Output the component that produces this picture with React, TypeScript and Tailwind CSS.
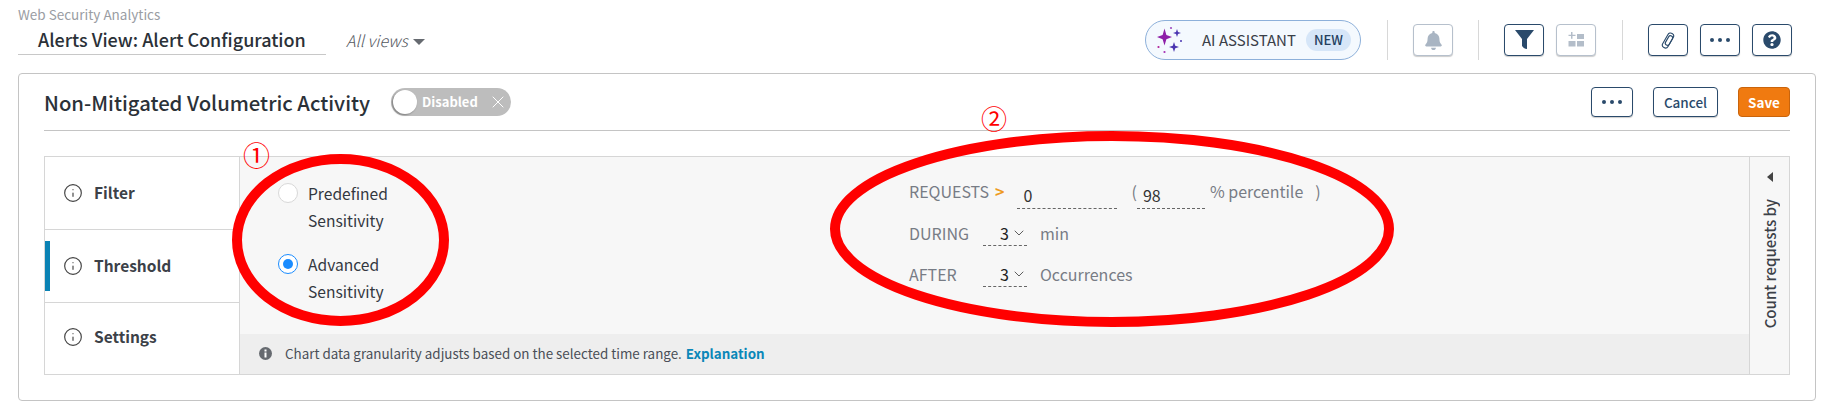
import { Info, ChevronDown, X } from "lucide-react";
import { FaBell, FaQuestionCircle } from "react-icons/fa";

const font = { fontFamily: '"Noto Sans CJK JP", "Noto Sans", sans-serif' };

function Star({ x, y, rx, ry, fill }: { x: number; y: number; rx: number; ry: number; fill: string }) {
    const kx = rx * 0.25;
    const ky = ry * 0.25;
    return (
        <path
            d={`M${x} ${y - ry} L${x + kx} ${y - ky} L${x + rx} ${y} L${x + kx} ${y + ky} L${x} ${y + ry} L${x - kx} ${y + ky} L${x - rx} ${y} L${x - kx} ${y - ky} Z`}
            fill={fill}
        />
    );
}

function Sparkles() {
    return (
        <svg width="26" height="28" viewBox="0 0 26 28">
            <Star x={7.500} y={11} rx={7.500} ry={8.500} fill="#8e1fa8" />
            <Star x={20} y={7} rx={4} ry={4} fill="#4a35b0" />
            <Star x={17} y={21} rx={5} ry={5} fill="#4a35b0" />
            <circle cx="14" cy="2" r="1.100" fill="#a04fc0" />
            <circle cx="24" cy="15" r="1" fill="#4a35b0" />
            <circle cx="1.500" cy="21" r="1.100" fill="#b01f9a" />
            <circle cx="7.500" cy="26" r="1.100" fill="#a52db5" />
        </svg>
    );
}

function Dots() {
    return (
        <div className="flex gap-[4px]">
            <span className="w-[4px] h-[4px] rounded-full bg-[#2a4a6b]" />
            <span className="w-[4px] h-[4px] rounded-full bg-[#2a4a6b]" />
            <span className="w-[4px] h-[4px] rounded-full bg-[#2a4a6b]" />
        </div>
    );
}

function IconButton({ children, disabled, className }: { children: React.ReactNode; disabled?: boolean; className?: string }) {
    return (
        <button className={`w-10 h-8 flex items-center justify-center rounded-[4px] border bg-white shadow-[0_1px_1px_rgba(0,0,0,0.2)] ${disabled ? "border-[#b6c0cc]" : "border-[#2a4a6b]"} ${className ?? ""}`}>
            {children}
        </button>
    );
}

function Tab({ label, active, last }: { label: string; active?: boolean; last?: boolean }) {
    return (
        <div className={`relative flex items-center pl-[18px] gap-[11px] ${last ? "flex-1 pb-[3px]" : "h-[73px] pb-[1px] border-b border-[#d6d6d6]"}`}>
            {active && <span className="absolute left-0 top-[11px] w-[5px] h-[50px] bg-[#0a82b4]" />}
            <Info size={20} strokeWidth={1.4} className="text-[#444]" />
            <span className="text-[15.5px] font-semibold text-[#3c4148]">{label}</span>
        </div>
    );
}

function Radio({ checked, first, second }: { checked?: boolean; first: string; second: string }) {
    return (
        <div className="flex items-start gap-[10px]">
            <span className={`mt-[3px] w-5 h-5 rounded-full border flex items-center justify-center bg-white ${checked ? "border-[#1a8cff]" : "border-[#d8d8d8]"}`}>
                {checked && <span className="w-[10px] h-[10px] rounded-full bg-[#1a8cff]" />}
            </span>
            <label className="text-[15.6px] leading-[27px] text-[#33383f]">
                {first}
                <br />
                {second}
            </label>
        </div>
    );
}

function Select({ unit }: { unit: string }) {
    return (
        <>
            <div className="w-[44px] h-[26px] flex items-center justify-end gap-[2px] border-b border-dashed border-[#666]">
                <span className="text-[16px] text-[#222]">3</span>
                <ChevronDown size={16} strokeWidth={1.3} className="text-[#444]" />
            </div>
            <span className="ml-[13px] text-[16px] text-[#777c85]">{unit}</span>
        </>
    );
}

export default function App() {
    return (
        <main style={font} className="relative w-screen h-screen overflow-hidden bg-white">
            {/* Top bar */}
            <header className="flex items-start h-[73px] pl-[18px] pr-[32px]">
                <div className="pt-[6px]">
                    <div className="text-[13.5px] leading-4 text-[#9a9da3]">Web Security Analytics</div>
                    <div className="w-[308px] h-[33px] pl-5 border-b border-[#c8c8c8] text-[18px] leading-[34px] font-medium text-[#2b3138]">
                        Alerts View: Alert Configuration
                    </div>
                </div>
                <div className="ml-5 mt-[27px] flex items-center gap-[5px] text-[16px] leading-[26px] italic font-light text-[#55595f]">
                    All views
                    <span className="w-0 h-0 mt-[3px] border-x-[6px] border-x-transparent border-t-[6px] border-t-[#666a70]" />
                </div>

                <div className="ml-auto mt-5 flex items-center">
                    <div className="w-[216px] h-10 flex items-center rounded-full border border-[#8db0da] bg-[#f4f9fe] pl-[11px]">
                        <Sparkles />
                        <span className="ml-[19px] text-[15px] text-[#3a4048]">AI ASSISTANT</span>
                        <span className="ml-[10px] w-[45px] h-[22px] rounded-full bg-[#d6e6f8] flex items-center justify-center text-[13px] font-medium text-[#24405f]">NEW</span>
                    </div>
                    <div className="ml-[26px] w-px h-10 bg-[#d8d8d8]" />
                    <IconButton disabled className="ml-[25px]"><FaBell size={19} className="text-[#a9b5c3]" /></IconButton>
                    <div className="ml-[25px] w-px h-10 bg-[#d8d8d8]" />
                    <IconButton className="ml-[25px]">
                        <svg width="19" height="20" viewBox="0 0 19 20" fill="#2a4a6b">
                            <path d="M0 0 H19 L12 9 V19 Q9 19 7 16 V9 Z" />
                        </svg>
                    </IconButton>
                    <IconButton disabled className="ml-3">
                        <svg width="16" height="16" viewBox="0 0 16 16" fill="#b3bdc9">
                            <path d="M3 0h1.500v2.700H7.500v1.300H4.500v2.700H3V4H0.500V2.700H3z" />
                            <rect x="9" y="2" width="7" height="5" />
                            <rect x="0.500" y="9" width="7" height="5.500" />
                            <rect x="9" y="9" width="7" height="5.500" />
                        </svg>
                    </IconButton>
                    <div className="ml-[26px] w-px h-10 bg-[#d8d8d8]" />
                    <IconButton className="ml-[25px]">
                        <svg width="14" height="19" viewBox="0 0 16 22" fill="none" stroke="#2a4a6b" strokeWidth="1.300">
                            <rect x="4.500" y="1.500" width="7" height="19" rx="3.500" transform="rotate(30 8 11)" />
                            <rect x="6.500" y="4.500" width="5" height="12" rx="2.500" transform="rotate(30 8 11)" />
                        </svg>
                    </IconButton>
                    <IconButton className="ml-3"><Dots /></IconButton>
                    <IconButton className="ml-3"><FaQuestionCircle size={18} className="text-[#2a4a6b]" /></IconButton>
                </div>
            </header>

            {/* Card */}
            <section className="ml-[18px] w-[1798px] h-[328px] rounded-[4px] border border-[#c4c4c4] px-[25px]">
                <div className="h-[57px] flex items-center border-b border-[#c4c4c4]">
                    <h1 className="text-[20.300px] font-medium text-[#2b3138]">Non-Mitigated Volumetric Activity</h1>
                    <div className="ml-[21px] w-[120px] h-7 rounded-full bg-[#bdbdbd] flex items-center pl-[2px]">
                        <span className="w-6 h-6 rounded-full bg-white shadow-[-1px_1px_2px_rgba(0,0,0,0.35)]" />
                        <span className="ml-[5px] text-[13px] font-semibold text-white">Disabled</span>
                        <X size={20} strokeWidth={1.2} className="ml-[10px] text-white" />
                    </div>
                    <div className="ml-auto flex items-center">
                        <button className="w-[42px] h-[30px] flex items-center justify-center rounded-[4px] border border-[#2a4a6b] bg-white shadow-[0_1px_1px_rgba(0,0,0,0.2)]"><Dots /></button>
                        <button className="ml-5 w-[65px] h-[30px] rounded-[4px] border border-[#2a4a6b] bg-white text-[13.5px] font-medium text-[#2a4a6b] shadow-[0_1px_1px_rgba(0,0,0,0.2)]">Cancel</button>
                        <button className="ml-5 w-[52px] h-[30px] rounded-[4px] border border-[#c9640c] bg-[#f07a10] text-[13.5px] font-semibold text-white">Save</button>
                    </div>
                </div>

                <div className="mt-[25px] h-[219px] flex border border-[#d6d6d6]">
                    <nav className="w-[195px] flex flex-col border-r border-[#d6d6d6]">
                        <Tab label="Filter" />
                        <Tab label="Threshold" active />
                        <Tab label="Settings" last />
                    </nav>

                    <div className="flex-1 flex flex-col">
                        <div className="flex-1 flex bg-[#f7f7f7]">
                            <div className="w-[669px] pl-[38px] pt-[23px] flex flex-col gap-[17px]">
                                <Radio first="Predefined" second="Sensitivity" />
                                <Radio checked first="Advanced" second="Sensitivity" />
                            </div>
                            <div className="pt-[21px] flex flex-col">
                                <div className="h-[26px] flex items-center text-[16px] text-[#777c85]">
                                    <span>REQUESTS</span>
                                    <span className="ml-[6px] font-bold text-[#ee9a22]">&gt;</span>
                                    <div className="ml-[13px] w-[100px] h-[30px] mt-[5px] pl-[6px] leading-[32px] border-b border-dashed border-[#666] text-[#333]">0</div>
                                    <span className="ml-[14px]">(</span>
                                    <div className="w-[68px] h-[30px] mt-[5px] pl-[6px] leading-[32px] border-b border-dashed border-[#666] text-[#333]">98</div>
                                    <span className="ml-[5px]">% percentile</span>
                                    <span className="ml-[12px]">)</span>
                                </div>
                                <div className="mt-4 h-[26px] flex items-center">
                                    <span className="w-[74px] text-[16px] text-[#777c85]">DURING</span>
                                    <Select unit="min" />
                                </div>
                                <div className="mt-[15px] h-[26px] flex items-center">
                                    <span className="w-[74px] text-[16px] text-[#777c85]">AFTER</span>
                                    <Select unit="Occurrences" />
                                </div>
                            </div>
                        </div>
                        <div className="h-10 flex items-center pl-[19px] pb-[2px] bg-[#eeeeee] text-[13.4px] text-[#4a4f57]">
                            <svg width="13" height="13" viewBox="0 0 13 13">
                                <circle cx="6.500" cy="6.500" r="6.500" fill="#666a70" />
                                <rect x="5.500" y="5.500" width="2" height="5" fill="white" />
                                <rect x="5.500" y="2.500" width="2" height="2" fill="white" />
                            </svg>
                            <span className="ml-[13px]">Chart data granularity adjusts based on the selected time range.</span>
                            <a className="ml-1 font-semibold text-[#0a87b8]">Explanation</a>
                        </div>
                    </div>

                    <aside className="w-[40px] flex flex-col items-center border-l border-[#d6d6d6] bg-[#f7f7f7] pt-[15px]">
                        <span className="w-0 h-0 border-y-[5px] border-y-transparent border-r-[6px] border-r-[#444]" />
                        <span className="mt-[17px] text-[15px] leading-[20px] font-medium text-[#3c4148] [writing-mode:vertical-rl] rotate-180">Count requests by</span>
                    </aside>
                </div>
            </section>

            {/* Red annotations drawn over the screenshot */}
            <svg className="absolute left-0 top-0 pointer-events-none" width="1824" height="408">
                <ellipse cx="340.500" cy="240" rx="103.500" ry="81" fill="none" stroke="#ff0000" strokeWidth="10" />
                <ellipse cx="1112" cy="229" rx="277" ry="93" fill="none" stroke="#ff0000" strokeWidth="10" />
            </svg>
            <span className="absolute left-[243px] top-[136px] text-[27px] leading-[38px] text-[#ff0000]">①</span>
            <span className="absolute left-[981px] top-[99px] text-[26px] leading-[38px] text-[#ff0000]">②</span>
        </main>
    );
}
